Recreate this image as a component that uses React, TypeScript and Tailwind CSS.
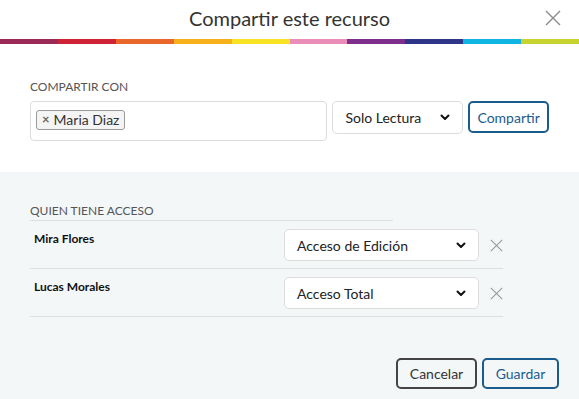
const stripe = [
  '#9b2a56',
  '#cd2335',
  '#e9672b',
  '#f6b11c',
  '#f8e224',
  '#ea8db8',
  '#7e2f8d',
  '#2e3587',
  '#10b5e1',
  '#c7d42f',
];

const people = [
  { name: 'Mira Flores', access: 'Acceso de Edición' },
  { name: 'Lucas Morales', access: 'Acceso Total' },
];

function Cross({ size, color }: { size: number; color: string }) {
  return (
    <svg width={size} height={size} viewBox="0 0 16 16" fill="none">
      <path d="M1 1 L15 15 M15 1 L1 15" stroke={color} strokeWidth="1.4" />
    </svg>
  );
}

function Chevron() {
  return (
    <svg width="10" height="7" viewBox="0 0 10 7" fill="none">
      <path d="M1.5 1.5 L5 5 L8.5 1.5" stroke="#111" strokeWidth="2" strokeLinecap="round" strokeLinejoin="round" />
    </svg>
  );
}

function FakeSelect({ label, className }: { label: string; className: string }) {
  return (
    <div
      className={`flex items-center justify-between bg-white border border-[#dcdcdc] rounded-[5px] pl-[12px] pr-[12px] text-[14px] text-[#222] ${className}`}
    >
      <span>{label}</span>
      <Chevron />
    </div>
  );
}

export default function App() {
  return (
    <div
      className="w-[579px] h-[399px] flex flex-col bg-white overflow-hidden"
      style={{ fontFamily: 'Lato, "Open Sans", sans-serif' }}
    >
      {/* Header */}
      <div className="relative h-[39px] flex items-center justify-center">
        <h2 className="text-[20px] text-[#333] leading-none pb-[4px]">Compartir este recurso</h2>
        <button className="absolute right-[18px] top-[10px]">
          <Cross size={16} color="#8a8a8a" />
        </button>
      </div>

      {/* Color bar */}
      <div className="flex h-[5px]">
        {stripe.map((c) => (
          <div key={c} className="flex-1" style={{ backgroundColor: c }} />
        ))}
      </div>

      {/* Share with */}
      <div className="px-[30px] pt-[35px] pb-[31px]">
        <p className="text-[12px] leading-[16px] text-[#555] mb-[6px]">COMPARTIR CON</p>
        <div className="flex items-start">
          <div className="w-[298px] h-[40px] border border-[#dcdcdc] rounded-[4px] pl-[5px] pt-[4px]">
            <span className="inline-flex items-center h-[20px] px-[5px] gap-[4px] bg-[#f4f4f4] border border-[#9a9a9a] rounded-[3px] text-[14px] text-[#333]">
              <span className="text-[13px] font-bold text-[#666] leading-none">×</span>
              Maria Diaz
            </span>
          </div>
          <FakeSelect label="Solo Lectura" className="ml-[5px] w-[131px] h-[33px]" />
          <button className="ml-[5px] w-[81px] h-[32px] border-2 border-[#1a5c8e] rounded-[5px] text-[14px] text-[#1a5c8e]">
            Compartir
          </button>
        </div>
      </div>

      {/* Who has access */}
      <div className="flex-1 bg-[#f4f7f8] pt-[31px] pl-[30px] flex flex-col">
        <p className="text-[12px] leading-[16px] text-[#555] pb-[1px] w-[363px] border-b border-[#dedede]">
          QUIEN TIENE ACCESO
        </p>
        <div className="w-[473px]">
          {people.map((p) => (
            <div key={p.name} className="flex items-start pt-[8px] pb-[7px] border-b border-[#dedede]">
              <span className="flex-1 pl-[4px] pt-[2px] text-[12px] leading-[16px] font-bold text-[#111]">
                {p.name}
              </span>
              <FakeSelect label={p.access} className="w-[195px] h-[32px]" />
              <span className="w-[24px] h-[32px] flex items-center justify-end">
                <Cross size={13} color="#9a9a9a" />
              </span>
            </div>
          ))}
        </div>

        <div className="mt-auto mb-[10px] mr-[20px] flex justify-end gap-[5px]">
          <button className="w-[81px] h-[31px] border-2 border-[#444] rounded-[5px] text-[14px] text-[#333]">
            Cancelar
          </button>
          <button className="w-[77px] h-[31px] border-2 border-[#1a5c8e] rounded-[5px] text-[14px] text-[#1a5c8e]">
            Guardar
          </button>
        </div>
      </div>
    </div>
  );
}
